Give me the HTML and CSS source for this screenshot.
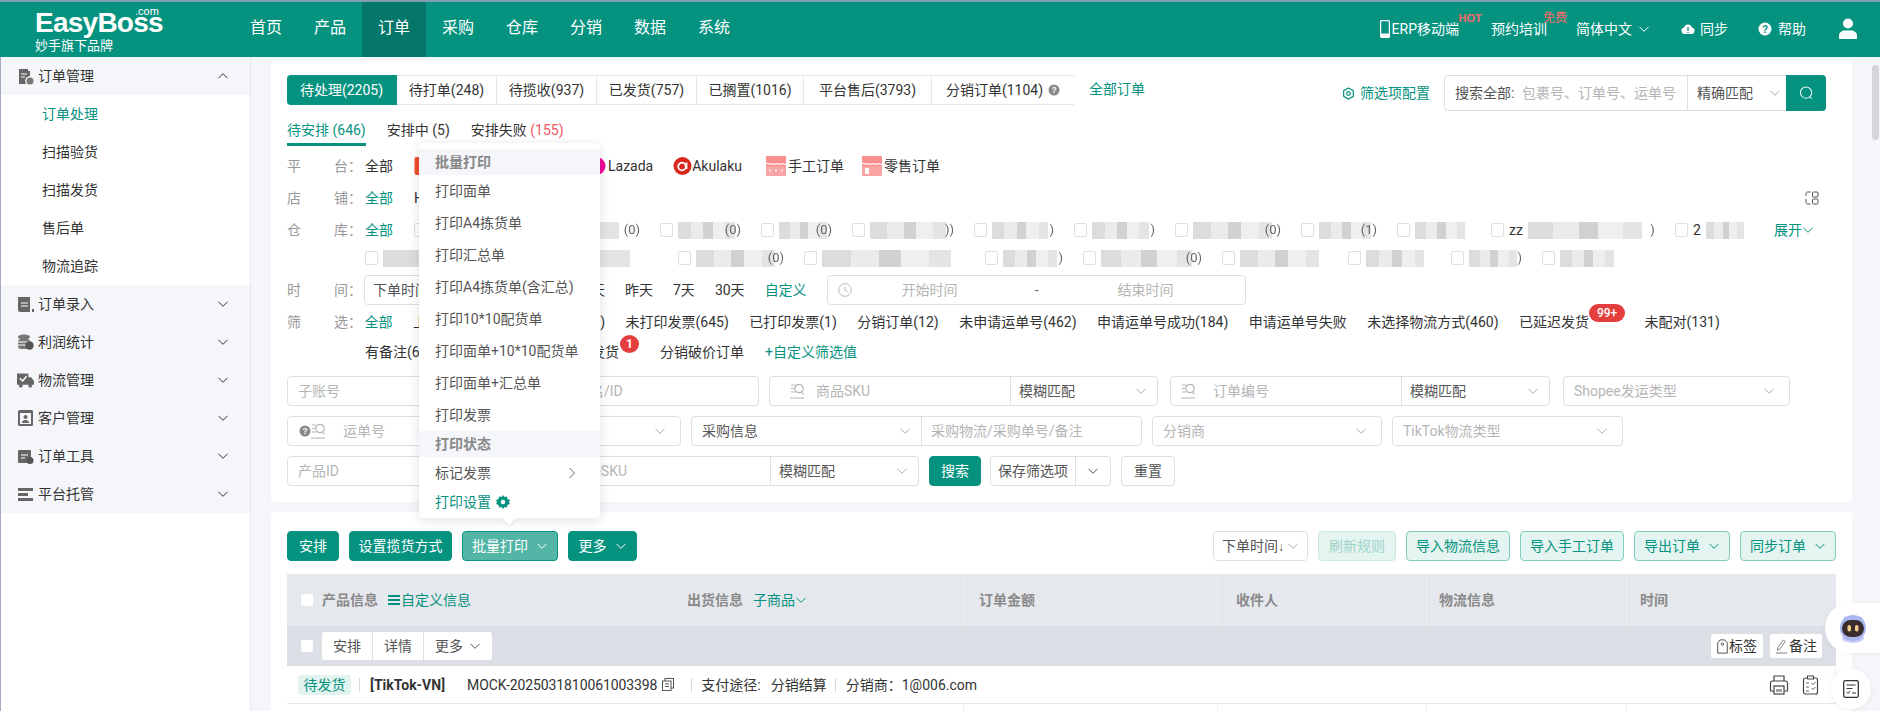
FILE: index.html
```html
<!DOCTYPE html>
<html lang="zh-CN">
<head>
<meta charset="utf-8">
<title>EasyBoss 订单处理</title>
<link rel="stylesheet" href="styles.css">
</head>
<body>
<svg class="defs" width="0" height="0">
  <symbol id="chev" viewBox="0 0 12 12"><path d="M1.5 3.8 6 8.3l4.5-4.5" fill="none" stroke="currentColor" stroke-width="1"/></symbol>
  <symbol id="lens" viewBox="0 0 14 16"><path d="M1 2h4M1 5.500h3M1 9h4M0 15h14" fill="none" stroke="currentColor" stroke-width="1.200"/><circle cx="9" cy="5.500" r="4.200" fill="none" stroke="currentColor" stroke-width="1.200"/><path d="m11.500 9 2 2.500" stroke="currentColor" stroke-width="1.200"/></symbol>
</svg>
<div class="strip"></div>
<header class="topbar">
  <div class="logo">
    <span class="logo-com">.com</span>
    <div class="logo-name">EasyBoss</div>
    <div class="logo-sub">妙手旗下品牌</div>
  </div>
  <nav class="nav">
    <a>首页</a><a>产品</a><a class="on">订单</a><a>采购</a><a>仓库</a><a>分销</a><a>数据</a><a>系统</a>
  </nav>
  <div class="top-right">
    <span class="tr tr-erp"><svg class="i-phone" viewBox="0 0 10 18"><rect x=".6" y=".6" width="8.8" height="16.8" rx="1" fill="none" stroke="#fff" stroke-width="1.2"/><rect x="1" y="13.5" width="8" height="3.5" fill="#fff"/></svg>ERP移动端<sup class="hot">HOT</sup></span>
    <span class="tr tr-train">预约培训<sup class="free">免费</sup></span>
    <span class="tr tr-lang">简体中文<svg class="chev"><use href="#chev"/></svg></span>
    <span class="tr tr-sync"><svg class="i-14" viewBox="0 0 14 14"><path d="M3.5 12A3.3 3.3 0 0 1 3 5.5a4.2 4.2 0 0 1 8 0 3.3 3.3 0 0 1-.5 6.5z" fill="#fff"/><path d="M7 5v4M7 10v1" stroke="#05927f" stroke-width="1.4"/></svg>同步</span>
    <span class="tr tr-help"><svg class="i-14" viewBox="0 0 14 14"><circle cx="7" cy="7" r="6.5" fill="#fff"/><text x="7" y="11" text-anchor="middle" font-size="10" font-weight="700" fill="#05927f" font-family="Liberation Sans">?</text></svg>帮助</span>
    <svg class="i-user" viewBox="0 0 20 21"><circle cx="10" cy="5.5" r="5" fill="#fff"/><path d="M1 21v-3.500c0-3 3-5 6-5h6c3 0 6 2 6 5V21z" fill="#fff"/></svg>
  </div>
</header>

<div class="main">
  <aside class="side">
    <div class="grp"><svg class="gi" viewBox="0 0 17 17"><path d="M2 1h9v2h2v5a5 5 0 0 0-4 8H2z" fill="#666"/><path d="M4 6h6M4 9h4" stroke="#fff"/><circle cx="13" cy="13" r="3.500" fill="#777"/></svg><span>订单管理</span><svg class="chev up"><use href="#chev"/></svg></div>
    <div class="sub on">订单处理</div>
    <div class="sub">扫描验货</div>
    <div class="sub">扫描发货</div>
    <div class="sub">售后单</div>
    <div class="sub">物流追踪</div>
    <div class="grp"><svg class="gi" viewBox="0 0 17 17"><path d="M1 1h12v15H3a2 2 0 0 1-2-2z" fill="#666"/><path d="M4 7h7M4 10h7" stroke="#fff"/><path d="M15 13h2v3h-2z" fill="#666"/></svg><span>订单录入</span><svg class="chev"><use href="#chev"/></svg></div>
    <div class="grp"><svg class="gi" viewBox="0 0 17 17"><ellipse cx="7" cy="3" rx="6" ry="2.500" fill="#777"/><rect x="1" y="5" width="12" height="10" rx="3" fill="#777"/><path d="M1 8h11M1 11h10" stroke="#fff"/><circle cx="12.500" cy="11.500" r="4.200" fill="#555"/></svg><span>利润统计</span><svg class="chev"><use href="#chev"/></svg></div>
    <div class="grp"><svg class="gi" viewBox="0 0 18 17"><path d="M0 1h12v12H0zM12 5h3l3 4v4h-6z" fill="#666"/><path d="m3 6 3 3 4-5" fill="none" stroke="#fff" stroke-width="1.500"/><circle cx="4" cy="14" r="2" fill="#666"/><circle cx="14" cy="14" r="2" fill="#666"/></svg><span>物流管理</span><svg class="chev"><use href="#chev"/></svg></div>
    <div class="grp"><svg class="gi" viewBox="0 0 17 17"><rect x="1" y="0" width="15" height="16" rx="1.500" fill="#666"/><rect x="3" y="3" width="11" height="11" fill="#f5f6fa"/><circle cx="8.500" cy="7" r="2" fill="#666"/><path d="M5 13a3.500 3 0 0 1 7 0z" fill="#666"/></svg><span>客户管理</span><svg class="chev"><use href="#chev"/></svg></div>
    <div class="grp"><svg class="gi" viewBox="0 0 17 17"><rect x="1" y="2" width="13" height="13" rx="1" fill="#666"/><path d="M4 7h7M4 10h4" stroke="#fff"/><circle cx="13" cy="12.500" r="3.500" fill="#555"/></svg><span>订单工具</span><svg class="chev"><use href="#chev"/></svg></div>
    <div class="grp"><svg class="gi" viewBox="0 0 17 17"><path d="M1 2h15v3H1zM1 7h10v3H1zM1 12h15v3H1z" fill="#666"/></svg><span>平台托管</span><svg class="chev"><use href="#chev"/></svg></div>
  </aside>

  <main class="content">
    <section class="panel filters">
      <div class="tabline">
        <div class="tabs">
          <a class="t-1 on">待处理(2205)</a><a class="t-2">待打单(248)</a><a class="t-2">待揽收(937)</a><a class="t-2">已发货(757)</a><a class="t-3">已搁置(1016)</a><a class="t-4">平台售后(3793)</a><a class="t-5">分销订单(1104)<svg class="i-q" viewBox="0 0 12 12"><circle cx="6" cy="6" r="5.500" fill="#888"/><text x="6" y="9.200" text-anchor="middle" font-size="8.500" font-weight="700" fill="#fff" font-family="Liberation Sans">?</text></svg></a>
        </div>
        <a class="green all">全部订单</a>
        <a class="green cfg"><svg class="i-12" viewBox="0 0 14 14"><path d="M7 1l5.200 3v6L7 13l-5.200-3V4z" fill="none" stroke="#05927f" stroke-width="1.300"/><circle cx="7" cy="7" r="2" fill="none" stroke="#05927f" stroke-width="1.300"/></svg>筛选项配置</a>
        <div class="search">
          <span class="s-lab">搜索全部:</span><span class="s-ph">包裹号、订单号、运单号</span>
          <span class="s-sel">精确匹配<svg class="chev gray"><use href="#chev"/></svg></span>
          <span class="s-btn"><svg viewBox="0 0 16 16" class="i-s"><circle cx="7.500" cy="7.500" r="6" fill="none" stroke="#fff" stroke-width="1.100"/><path d="m11.500 12 2 2" stroke="#fff" stroke-width="1.100"/></svg></span>
        </div>
      </div>

      <div class="subtabs">
        <a class="on">待安排 (646)</a><a>安排中 (5)</a><a>安排失败 <em>(155)</em></a>
      </div>

      <div class="frow">
        <span class="lab"><i>平</i><i>台：</i></span>
        <span class="val">全部</span>
        <span class="pf pf-sp"><svg class="i-pf" viewBox="0 0 18 18"><rect width="18" height="18" rx="2" fill="#ee4d2d"/></svg>Shopee</span>
        <span class="pf"><svg class="i-pf" viewBox="0 0 18 18"><circle cx="9" cy="9" r="9" fill="#f0069b"/></svg>Lazada</span>
        <span class="pf pf-ak"><svg class="i-pf" viewBox="0 0 18 18"><circle cx="9" cy="9" r="9" fill="#d9281e"/><circle cx="8.500" cy="9.500" r="3.800" fill="none" stroke="#fff" stroke-width="1.800"/><path d="M13 5.500v6.500" stroke="#fff" stroke-width="1.800"/></svg>Akulaku</span>
        <span class="pf pf-sg"><svg class="i-pf2" viewBox="0 0 20 20"><rect width="20" height="20" rx="1" fill="#fb8f8f"/><rect y="10" width="20" height="10" fill="#f9a5a5"/><path d="M0 8c2-2.500 3 1.500 5 0s3 1.500 5 0 3 1.500 5 0 3 1.500 5 0" fill="none" stroke="#fff" stroke-width="1.100"/><path d="M4 13v3M10 13v3M16 13v3" stroke="#fff" stroke-width="1.100"/></svg>手工订单</span>
        <span class="pf"><svg class="i-pf2" viewBox="0 0 20 20"><rect width="20" height="20" rx="1" fill="#fb8f8f"/><rect y="10" width="20" height="10" fill="#f9a5a5"/><path d="M0 8c2-2.500 3 1.500 5 0s3 1.500 5 0 3 1.500 5 0 3 1.500 5 0" fill="none" stroke="#fff" stroke-width="1.100"/><path d="M3 12h4v6H3z" fill="#fff"/></svg>零售订单</span>
      </div>

      <div class="frow">
        <span class="lab"><i>店</i><i>铺：</i></span>
        <span class="val green">全部</span>
        <span class="val">H</span>
        <svg class="i-tree" viewBox="0 0 14 14"><path d="M5.500 1H2.500A1.500 1.500 0 0 0 1 2.500V5M1 8v3.500A1.500 1.500 0 0 0 2.500 13h3" fill="none" stroke="#555"/><rect x="7.500" y="1" width="5.500" height="5" rx="1" fill="none" stroke="#555"/><rect x="7.500" y="8" width="5.500" height="5" rx="1" fill="none" stroke="#555"/></svg>
      </div>

      <div class="frow">
        <span class="lab"><i>仓</i><i>库：</i></span>
        <span class="val green">全部</span>
        <div class="whs">
          <label class="wh"><b class="cb"></b><s class="mz m208">(0)</s></label>
          <label class="wh"><b class="cb"></b><s class="mz m63">(0)</s></label>
          <label class="wh"><b class="cb"></b><s class="mz m53">(0)</s></label>
          <label class="wh"><b class="cb"></b><s class="mz m84">))</s></label>
          <label class="wh"><b class="cb"></b><s class="mz m62">)</s></label>
          <label class="wh"><b class="cb"></b><s class="mz m63">)</s></label>
          <label class="wh"><b class="cb"></b><s class="mz m88">(0)</s></label>
          <label class="wh"><b class="cb"></b><s class="mz m58">(1)</s></label>
          <label class="wh"><b class="cb"></b><s class="mz m56"></s></label>
          <label class="wh"><b class="cb"></b><span>zz</span><s class="mz m127">)</s></label>
          <label class="wh"><b class="cb"></b><span>2</span><s class="mz m42"></s></label>
        </div>
        <a class="green more">展开<svg class="chev"><use href="#chev"/></svg></a>
      </div>

      <div class="frow wh2">
        <div class="whs">
          <label class="wh"><b class="cb"></b><s class="mz m275"></s></label>
          <label class="wh"><b class="cb"></b><s class="mz m88">(0)</s></label>
          <label class="wh"><b class="cb"></b><s class="mz m143"></s></label>
          <label class="wh"><b class="cb"></b><s class="mz m60">)</s></label>
          <label class="wh"><b class="cb"></b><s class="mz m101">(0)</s></label>
          <label class="wh"><b class="cb"></b><s class="mz m88"></s></label>
          <label class="wh"><b class="cb"></b><s class="mz m65"></s></label>
          <label class="wh"><b class="cb"></b><s class="mz m53">)</s></label>
          <label class="wh"><b class="cb"></b><s class="mz m60"></s></label>
        </div>
      </div>

      <div class="frow time">
        <span class="lab"><i>时</i><i>间：</i></span>
        <div class="box w190"><span class="dark">下单时间</span></div>
        <span class="val">今天</span><span class="val">昨天</span><span class="val">7天</span><span class="val">30天</span><span class="val green">自定义</span>
        <div class="range">
          <svg class="i-clock" viewBox="0 0 14 14"><circle cx="7" cy="7" r="6.300" fill="none" stroke="#bbb"/><path d="M7 3.500V7l2.500 1.500" fill="none" stroke="#bbb"/></svg>
          <span class="r-a">开始时间</span><span class="r-d">-</span><span class="r-b">结束时间</span>
        </div>
      </div>

      <div class="frow filt">
        <span class="lab"><i>筛</i><i>选：</i></span>
        <span class="val green">全部</span>
        <span class="val fhide"><span>上传发票</span><span>)</span></span>
        <span class="val">未打印发票(645)</span>
        <span class="val">已打印发票(1)</span>
        <span class="val">分销订单(12)</span>
        <span class="val">未申请运单号(462)</span>
        <span class="val">申请运单号成功(184)</span>
        <span class="val">申请运单号失败</span>
        <span class="val">未选择物流方式(460)</span>
        <span class="val bdg-host">已延迟发货<b class="pill">99+</b></span>
        <span class="val unp">未配对(131)</span>
      </div>

      <div class="frow filt2">
        <span class="val fhide2"><span>有备注(6</span><span class="bdg-host">发货<b class="dot">1</b></span></span>
        <span class="val">分销破价订单</span>
        <span class="val green">+自定义筛选值</span>
      </div>

      <div class="inrow r1">
        <div class="box w232 ph">子账号</div>
        <div class="box w230 ph pn1">商品名/ID</div>
        <div class="box w389 grp-in"><div class="gi-a a240"><svg class="lens"><use href="#lens"/></svg><span class="ph">商品SKU</span></div><div class="gi-s">模糊匹配<svg class="chev gray"><use href="#chev"/></svg></div></div>
        <div class="box w380 grp-in ml2"><div class="gi-a a230"><svg class="lens"><use href="#lens"/></svg><span class="ph">订单编号</span></div><div class="gi-s">模糊匹配<svg class="chev gray"><use href="#chev"/></svg></div></div>
        <div class="box w227 ph sel ml3">Shopee发运类型<svg class="chev gray"><use href="#chev"/></svg></div>
      </div>

      <div class="inrow">
        <div class="box w233 ph yun"><svg class="i-q" viewBox="0 0 12 12"><circle cx="6" cy="6" r="5.500" fill="#888"/><text x="6" y="9.200" text-anchor="middle" font-size="8.500" font-weight="700" fill="#fff" font-family="Liberation Sans">?</text></svg><svg class="lens"><use href="#lens"/></svg><span>运单号</span></div>
        <div class="box w151 ph sel">订单状态<svg class="chev gray"><use href="#chev"/></svg></div>
        <div class="box w450 grp-in"><div class="gi-s w230s dark2">采购信息<svg class="chev gray"><use href="#chev"/></svg></div><div class="gi-a ph pad9">采购物流/采购单号/备注</div></div>
        <div class="box w230 ph sel">分销商<svg class="chev gray"><use href="#chev"/></svg></div>
        <div class="box w231 ph sel">TikTok物流类型<svg class="chev gray"><use href="#chev"/></svg></div>
      </div>

      <div class="inrow">
        <div class="box w232 ph">产品ID</div>
        <div class="box w390 grp-in"><div class="gi-a a241 ph pn2">平台商品-SKU</div><div class="gi-s">模糊匹配<svg class="chev gray"><use href="#chev"/></svg></div></div>
        <a class="btn pri b-s">搜索</a>
        <div class="box save"><span>保存筛选项</span><span class="save-c"><svg class="chev dk"><use href="#chev"/></svg></span></div>
        <a class="btn plain">重置</a>
      </div>
    </section>

    <section class="panel orders">
      <div class="actions">
        <a class="btn pri w52">安排</a>
        <a class="btn pri w103">设置揽货方式</a>
        <a class="btn pri act w96">批量打印<svg class="chev"><use href="#chev"/></svg></a>
        <a class="btn pri w69">更多<svg class="chev"><use href="#chev"/></svg></a>
        <div class="box sort"><span>下单时间<i class="arr">↓</i></span><svg class="chev gray"><use href="#chev"/></svg></div>
        <a class="btn lite dis w78">刷新规则</a>
        <a class="btn lite w104">导入物流信息</a>
        <a class="btn lite w104">导入手工订单</a>
        <a class="btn lite w96">导出订单<svg class="chev"><use href="#chev"/></svg></a>
        <a class="btn lite w96">同步订单<svg class="chev"><use href="#chev"/></svg></a>
      </div>

      <div class="thead cols">
        <div class="th first"><b class="cb sm"></b><span>产品信息</span><a class="green cust"><svg class="i-list" viewBox="0 0 12 10"><path d="M0 1h12M0 5h12M0 9h12" stroke="#05927f" stroke-width="2"/></svg>自定义信息</a></div>
        <div class="th pl11"><span>出货信息</span><a class="green subg">子商品<svg class="chev"><use href="#chev"/></svg></a></div>
        <div class="th ln p15">订单金额</div>
        <div class="th ln p18">收件人</div>
        <div class="th ln p12">物流信息</div>
        <div class="th ln p13">时间</div>
      </div>

      <div class="ghead">
        <b class="cb sm"></b>
        <div class="bgroup"><a>安排</a><a>详情</a><a>更多<svg class="chev"><use href="#chev"/></svg></a></div>
        <div class="gright">
          <a class="gbtn"><svg class="i-tag" viewBox="0 0 12 16"><path d="M3.500.8h5L11.200 4v11.200H.8V4z" fill="none" stroke="#444"/><circle cx="6" cy="5.500" r="1.300" fill="none" stroke="#444"/></svg>标签</a>
          <a class="gbtn"><svg class="i-tag2" viewBox="0 0 14 16"><path d="M9 1l2 1.500L5 11l-2.500 1L3 9zM1 15h12" fill="none" stroke="#777"/></svg>备注</a>
        </div>
      </div>

      <div class="orow">
        <span class="status">待发货</span>
        <i class="vd"></i>
        <b class="plat">[TikTok-VN]</b>
        <span class="ono">MOCK-2025031810061003398</span>
        <svg class="i-copy" viewBox="0 0 12 13"><rect x="3" y=".5" width="8.500" height="9.500" fill="none" stroke="#555"/><rect x=".5" y="3" width="8.500" height="9.500" fill="#fff" stroke="#555"/><path d="M3 6h4M3 8.500h4" stroke="#555"/></svg>
        <i class="vd"></i>
        <span class="pay">支付途径:</span><span>分销结算</span>
        <i class="vd"></i>
        <span>分销商：</span><span class="mail">1@006.com</span>
        <div class="oicons">
          <svg class="i-print" viewBox="0 0 20 20"><path d="M5 6V1h10v5M5 16H1.500V8a2 2 0 0 1 2-2h13a2 2 0 0 1 2 2v8H15" fill="none" stroke="#444" stroke-width="1.200"/><rect x="5" y="11" width="10" height="8" fill="none" stroke="#444" stroke-width="1.200"/><path d="M8 14v3M10 14v3M12 14v3" stroke="#444"/></svg>
          <svg class="i-clip" viewBox="0 0 16 20"><rect x="1" y="3" width="14" height="16" rx="2" fill="none" stroke="#444" stroke-width="1.200"/><rect x="5" y="1" width="6" height="3" fill="#fff" stroke="#444"/><path d="M3.500 8h3M3.500 12h3M3.500 16h3M9 8l1.500 1.500L13 7M9 13l1.500 1.500L13 12" fill="none" stroke="#666"/></svg>
        </div>
      </div>
      <div class="tail cols"><i></i><i></i><i class="ln"></i><i class="ln"></i><i class="ln"></i><i class="ln"></i></div>
    </section>
  </main>
  <div class="track"><div class="thumb"></div></div>
</div>

<div class="popup">
  <div class="pi head">批量打印</div>
  <div class="pi">打印面单</div>
  <div class="pi">打印A4拣货单</div>
  <div class="pi">打印汇总单</div>
  <div class="pi">打印A4拣货单(含汇总)</div>
  <div class="pi">打印10*10配货单</div>
  <div class="pi">打印面单+10*10配货单</div>
  <div class="pi">打印面单+汇总单</div>
  <div class="pi">打印发票</div>
  <div class="pi head">打印状态</div>
  <div class="pi mark">标记发票<svg class="i-right" viewBox="0 0 8 12"><path d="m1.500 1 5 5-5 5" fill="none" stroke="#666"/></svg></div>
  <div class="pi set green">打印设置<svg class="i-gear" viewBox="0 0 14 14"><path d="M7 0l1.500 2 2.500-.5.500 2.500 2.500 1L13 7l1 2-2.500 1-.5 2.500-2.500-.5L7 14l-1.500-2-2.500.5L2.500 10 0 9l1-2-1-2 2.500-1L3 1.500l2.500.5z" fill="#05927f"/><circle cx="7" cy="7" r="2.200" fill="#fff"/></svg></div>
</div>

<div class="bot"><svg viewBox="0 0 30 30" class="i-bot"><circle cx="8" cy="6" r="2.500" fill="#b9c2f5"/><circle cx="22" cy="6" r="2.500" fill="#b9c2f5"/><ellipse cx="15" cy="25" rx="11" ry="5" fill="#c9cdfa"/><circle cx="15" cy="15" r="13" fill="#aab6f0"/><rect x="4" y="7" width="22" height="17" rx="8.500" fill="#3a2c2c"/><rect x="9.500" y="12" width="3.500" height="6.500" rx="1.700" fill="#f3c98a"/><rect x="17" y="12" width="3.500" height="6.500" rx="1.700" fill="#f3c98a"/></svg></div>
<div class="todo"><svg viewBox="0 0 16 18" class="i-todo"><rect x=".7" y=".7" width="14.600" height="16.600" rx="1.500" fill="none" stroke="#333" stroke-width="1.300"/><path d="M3.500 5h9M3.500 8.500h6M3.500 12l1.500 1.500L7 11M9 13h4" fill="none" stroke="#333"/></svg></div>
</body>
</html>
```

FILE: styles.css
```css
* { box-sizing: border-box; }
html, body { margin: 0; height: 711px; overflow: hidden; }
body {
  position: relative;
  width: 1880px;
  font-family: Roboto, "Noto Sans CJK SC", sans-serif;
  font-size: 14px;
  line-height: 20px;
  color: #333;
  background: #fff;
}
a { color: inherit; text-decoration: none; }
i, em, s { font-style: normal; text-decoration: none; }
.defs { position: absolute; }
.green { color: #05927f; }
.chev { width: 12px; height: 12px; flex: none; color: inherit; }
.chev.gray { color: #aaa; }
.chev.dk { color: #555; }
.chev.up { transform: rotate(180deg); }

.strip { height: 2px; background: #7f9fb0; }
.topbar { height: 55px; display: flex; align-items: stretch; background: #05927f; color: #fff; padding-left: 35px; }
.logo { position: relative; width: 199px; flex: none; }
.logo-com { position: absolute; left: 100px; top: 3px; font: 11px/12px "Liberation Sans", sans-serif; }
.logo-name { font: 700 28px/26px "Liberation Sans", sans-serif; letter-spacing: -.75px; margin-top: 8px; }
.logo-sub { font-size: 13px; line-height: 16px; margin-top: 2px; white-space: nowrap; }
.nav { display: flex; }
.nav a { width: 64px; text-align: center; font-size: 16px; line-height: 52px; }
.nav a.on { background: #04776a; }
.top-right { margin-left: auto; display: flex; align-items: center; padding-right: 22px; padding-bottom: 2px; height: 55px; }
.tr { position: relative; display: flex; align-items: center; white-space: nowrap; }
.i-phone { width: 10px; height: 18px; margin-right: 2px; }
.tr-train { margin-left: 32px; }
.tr-lang { margin-left: 29px; gap: 6px; }
.tr-sync { margin-left: 31px; gap: 5px; }
.tr-help { margin-left: 30px; gap: 6px; }
.i-14 { width: 14px; height: 14px; }
.i-user { width: 20px; height: 21px; margin-left: 32px; }
.hot { position: absolute; left: 79px; top: -7px; font: 700 11px/12px "Liberation Sans", sans-serif; color: #f56c6c; }
.free { position: absolute; left: 52px; top: -8px; font-size: 12px; line-height: 14px; color: #f56c6c; }

.main { display: flex; height: 654px; background: #f5f6fa; }
.side { width: 251px; flex: none; background: #fff; border-right: 1px solid #e6e8ef; border-left: 1px solid #a6adc0; }
.grp { display: flex; align-items: center; height: 38px; background: #f5f6fa; padding-left: 16px; padding-right: 21px; }
.grp span { margin-left: 4px; flex: 1; }
.gi { width: 17px; height: 17px; flex: none; }
.sub { height: 38px; line-height: 38px; padding-left: 41px; background: #fff; }
.sub.on { color: #05927f; }

.content { width: 1581px; margin-left: 20px; flex: none; padding-top: 3px; display: flex; flex-direction: column; gap: 10px; }
.panel { background: #fff; border-radius: 4px; padding: 15px 16px 0; }
.filters { height: 442px; }
.orders { flex: 1; overflow: hidden; padding-top: 19px; border-radius: 4px 4px 0 0; }
.track { flex: 1; position: relative; }
.thumb { margin: 8px 1px 0 auto; width: 7px; height: 75px; border-radius: 4px; background: #d4d6db; }

.tabline { display: flex; height: 30px; }
.tabs { display: flex; height: 30px; }
.tabs a { display: flex; align-items: center; justify-content: center; border: 1px solid #e4e6ed; border-left: 0; white-space: nowrap; }
.tabs a.on { background: #05927f; border-color: #05927f; color: #fff; border-radius: 4px 0 0 4px; }
.tabs a:last-child { border-right: 0; }
.t-1 { width: 110px; }
.t-2 { width: 100px; }
.t-3 { width: 107px; }
.t-4 { width: 128px; }
.t-5 { width: 142px; gap: 5px; }
.i-q { width: 12px; height: 12px; flex: none; }
.all { margin-left: 15px; line-height: 28px; }
.cfg { margin-left: auto; display: flex; align-items: center; gap: 5px; height: 36px; }
.i-12 { width: 13px; height: 13px; }
.search { position: relative; margin: 0 10px 0 14px; width: 382px; height: 36px; border: 1px solid #dcdfe6; border-radius: 4px; display: flex; align-items: center; padding-left: 10px; flex: none; }
.s-lab { width: 67px; color: #555; }
.s-ph { color: #b5b5b5; width: 165px; white-space: nowrap; }
.s-sel { display: flex; align-items: center; height: 34px; border-left: 1px solid #dcdfe6; padding-left: 9px; color: #555; gap: 16px; }
.s-btn { position: absolute; right: -1px; top: -1px; width: 40px; height: 36px; background: #05927f; border-radius: 0 4px 4px 0; display: flex; align-items: center; justify-content: center; }
.i-s { width: 15px; height: 16px; }

.subtabs { display: flex; gap: 21px; margin-top: 12px; height: 29px; }
.subtabs a { height: 29px; padding-top: 3px; white-space: nowrap; }
.subtabs a.on { color: #05927f; border-bottom: 3px solid #05927f; }
.subtabs em { color: #f0555f; }

.frow { display: flex; align-items: center; height: 32px; white-space: nowrap; gap: 21px; }
.frow:nth-of-type(3) { margin-top: 4px; }
.lab { display: flex; justify-content: space-between; width: 75px; margin-right: -18px; color: #999; flex: none; }
.lab i { display: block; }
.pf { display: flex; align-items: center; gap: 2px; }
.pf-sp { width: 152px; gap: 5px; }
.pf-ak { margin-left: -1px; margin-right: 3px; gap: 0; }
.pf-sg { margin-right: -3px; }
.i-pf { width: 19px; height: 18px; }
.i-pf2 { width: 20px; height: 20px; }
.i-tree { width: 14px; height: 14px; margin-left: auto; margin-right: 17px; }
.whs { display: flex; gap: 20px; }
.wh { display: flex; align-items: center; gap: 5px; }
.cb { display: block; width: 13px; height: 14px; border: 1px solid #dcdfe6; border-radius: 2px; background: #fff; flex: none; }
.mz { display: flex; justify-content: flex-end; align-items: center; height: 17px; font-size: 13px; font-weight: 400; color: #666; background: linear-gradient(90deg, #dddbdb 0 20%, #ebebeb 20% 40%, #d3d0d0 40% 55%, #efefef 55% 75%, #e4e4e5 75% 90%, #fff 90%); filter: blur(.5px); }
.m42 { width: 42px; } .m50 { width: 50px; } .m53 { width: 53px; } .m56 { width: 56px; } .m58 { width: 58px; }
.m60 { width: 60px; } .m62 { width: 62px; } .m63 { width: 63px; } .m65 { width: 65px; } .m84 { width: 84px; }
.m88 { width: 88px; } .m101 { width: 101px; } .m127 { width: 127px; } .m143 { width: 143px; } .m208 { width: 208px; } .m275 { width: 275px; }
.more { display: flex; align-items: center; margin-left: auto; margin-right: 22px; }
.wh2 { height: 24px; padding-left: 78px; }
.time { height: 30px; margin-top: 5px; gap: 20px; }
.filt { margin-top: 1px; gap: 20.5px; }
.filt2 { height: 28px; padding-left: 78px; }
.fhide { width: 192px; display: flex; justify-content: space-between; }
.fhide2 { width: 254px; display: flex; justify-content: space-between; margin-right: 20px; }
.unp { margin-left: 35px; }
.bdg-host { position: relative; }
.pill { position: absolute; left: 70px; top: -8px; width: 36px; height: 18px; background: #e53e3e; color: #fff; border-radius: 9px; font: 500 12px/18px Roboto, sans-serif; text-align: center; }
.dot { position: absolute; left: 29px; top: -7px; width: 19px; height: 18px; border-radius: 50%; background: #e53e3e; color: #fff; font: 700 12px/18px Roboto, sans-serif; text-align: center; }

.box { height: 30px; border: 1px solid #dcdfe6; border-radius: 4px; display: flex; align-items: center; padding-left: 10px; white-space: nowrap; background: #fff; flex: none; }
.ph { color: #b5b5b5; }
.dark { color: #555; }
.time .box { margin-right: 0; padding-left: 8px; }
.w190 { width: 193px; }
.range { position: relative; width: 419px; height: 30px; border: 1px solid #dcdfe6; border-radius: 4px; display: flex; align-items: center; color: #b5b5b5; }
.i-clock { width: 14px; height: 14px; margin-left: 10px; }
.r-a { margin-left: 50px; }
.r-d { margin-left: 77px; color: #666; }
.r-b { margin-left: 79px; }

.inrow { display: flex; gap: 10px; height: 30px; margin-top: 10px; }
.r1 { margin-top: 10px; }
.ml2 { margin-left: 2px; } .ml3 { margin-left: 3px; }
.w232 { width: 232px; } .w230 { width: 230px; } .w233 { width: 233px; } .w151 { width: 151px; }
.w389 { width: 389px; } .w380 { width: 380px; } .w227 { width: 227px; } .w450 { width: 451px; } .w231 { width: 231px; } .w390 { width: 390px; }
.pn1 { padding-left: 32px; }
.sel { justify-content: space-between; padding-right: 14px; }
.grp-in { padding-left: 0; color: #555; }
.gi-a { display: flex; align-items: center; height: 28px; padding-left: 11px; }
.a240 { width: 240px; } .a230 { width: 230px; } .a241 { width: 240px; }
.gi-s { flex: 1; height: 28px; border-left: 1px solid #dcdfe6; display: flex; align-items: center; justify-content: space-between; padding: 0 10px 0 8px; }
.w230s { flex: none; width: 230px; border: 0; border-right: 1px solid #dcdfe6; padding-left: 10px; }
.pad9 { padding-left: 9px; }
.pn2 { justify-content: flex-end; padding-right: 143px; }
.lens { width: 14px; height: 16px; color: #b5b5b5; margin-right: 12px; margin-left: 9px; flex: none; }
.a230 .lens { margin-left: -1px; margin-right: 18px; }
.yun { padding-left: 11px; }
.yun .lens { margin: 0 18px 0 0; }

.btn { display: flex; align-items: center; justify-content: center; gap: 8px; height: 30px; padding: 0 12px; border-radius: 4px; white-space: nowrap; flex: none; }
.w52 { width: 52px; } .w103 { width: 103px; } .w96 { width: 96px; } .w69 { width: 69px; } .w78 { width: 78px; } .w104 { width: 104px; }
.actions .btn { padding: 0; }
.pri { background: #05927f; color: #fff; border: 1px solid #05927f; }
.act { background: #52b5a5; }
.b-s { width: 52px; margin-left: 0; }
.plain { border: 1px solid #dcdfe6; color: #555; }
.save { width: 121px; padding: 0; margin-left: -1px; color: #555; }
.save span:first-child { width: 84px; text-align: center; }
.save-c { flex: 1; height: 28px; border-left: 1px solid #dcdfe6; display: flex; align-items: center; justify-content: center; }
.lite { background: #e4f4f0; color: #05927f; border: 1px solid #82ccbd; }
.dis { background: #e4f4f0; color: #9ed3c8; border-color: #cbe9e2; }

.actions { display: flex; gap: 10px; height: 30px; }
.sort { margin-left: auto; width: 95px; color: #555; padding: 0 8px; justify-content: space-between; }
.arr { display: inline-block; width: 8px; font-family: "Liberation Sans", sans-serif; font-size: 12px; }
.cols { display: grid; grid-template-columns: 390px 286px 254px 209px 200px 210px; }
.thead { margin-top: 13px; height: 52px; background: #e5e8ed; font-weight: 700; color: #8a8a8a; }
.th { display: flex; align-items: center; height: 52px; white-space: nowrap; }
.ln { border-left: 1px solid #edeff3; }
.first { padding-left: 14px; }
.first span { margin-left: 9px; }
.cb.sm { width: 12px; height: 12px; border: 0; }
.cust { display: flex; align-items: center; margin-left: 10px; font-weight: 400; gap: 1px; }
.i-list { width: 12px; height: 10px; }
.pl11 { padding-left: 10px; }
.subg { display: flex; align-items: center; margin-left: 10px; font-weight: 400; }
.p15 { padding-left: 15px; } .p18 { padding-left: 18px; } .p12 { padding-left: 12px; } .p13 { padding-left: 13px; }
.ghead { display: flex; align-items: center; height: 40px; background: #dcdfe6; padding-left: 14px; }
.bgroup { display: flex; height: 28px; margin-left: 9px; background: #fff; border-radius: 3px; color: #555; }
.bgroup a { display: flex; align-items: center; justify-content: center; gap: 6px; width: 51px; border-right: 1px solid #dcdfe6; }
.bgroup a:last-child { width: 68px; border: 0; }
.gright { margin-left: auto; display: flex; gap: 7px; padding-right: 14px; }
.gbtn { display: flex; align-items: center; justify-content: center; gap: 1px; width: 52px; height: 24px; background: #fff; border-radius: 2px; }
.i-tag { width: 11px; height: 15px; }
.i-tag2 { width: 13px; height: 15px; }
.orow { display: flex; align-items: center; height: 38px; padding-left: 11px; border-bottom: 1px solid #e8eaef; border-right: 1px solid #eceef2; white-space: nowrap; }
.status { width: 53px; height: 20px; line-height: 20px; text-align: center; background: #e3f3ef; color: #05927f; border-radius: 3px; }
.vd { width: 1px; height: 14px; background: #d5d7dc; margin: 0 10px 0 8px; }
.plat { color: #333; margin-right: 22px; }
.ono { letter-spacing: -.1px; }
.i-copy { width: 12px; height: 13px; margin: 0 9px 0 5px; }
.pay { margin-left: -1px; margin-right: 10px; }
.mail { margin-left: 0; }
.oicons { margin-left: auto; display: flex; gap: 13px; padding-right: 16px; align-items: center; }
.i-print { width: 20px; height: 20px; }
.i-clip { width: 17px; height: 20px; }
.tail { height: 8px; }

.popup { position: absolute; left: 419px; top: 143px; width: 181px; height: 375px; padding-top: 6px; background: #fff; border-radius: 4px; box-shadow: 0 2px 12px rgba(0,0,0,.12); z-index: 5; color: #555; }
.popup::after { content: ""; position: absolute; left: 85px; bottom: -5px; width: 10px; height: 10px; background: #fff; transform: rotate(45deg); box-shadow: 2px 2px 3px rgba(0,0,0,.05); }
.pi { height: 32px; line-height: 32px; padding-left: 16px; white-space: nowrap; }
.pi.head { height: 26px; line-height: 26px; background: #f5f6fa; color: #888; font-weight: 700; }
.pi.mark { display: flex; align-items: center; justify-content: space-between; padding-right: 24px; }
.pi.set { display: flex; align-items: center; gap: 5px; height: 26px; color: #05927f; }
.i-right { width: 8px; height: 12px; }
.i-gear { width: 14px; height: 14px; }

.bot { position: absolute; left: 1825px; top: 603px; width: 55px; height: 50px; background: #fff; border-radius: 25px 0 0 25px; box-shadow: 0 1px 6px rgba(0,0,0,.05); z-index: 4; display: flex; align-items: center; padding-left: 13px; }
.i-bot { width: 30px; height: 30px; }
.todo { position: absolute; left: 1831px; top: 669px; width: 40px; height: 40px; border-radius: 20px; background: #fff; box-shadow: 0 1px 6px rgba(0,0,0,.06); z-index: 4; display: flex; align-items: center; justify-content: center; }
.i-todo { width: 16px; height: 18px; }
```
